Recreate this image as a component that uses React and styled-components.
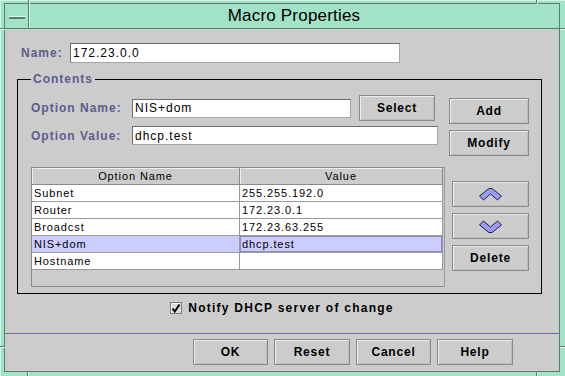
import React from "react";
import styled, { createGlobalStyle } from "styled-components";

const rows = [
  { name: "Subnet", value: "255.255.192.0" },
  { name: "Router", value: "172.23.0.1" },
  { name: "Broadcst", value: "172.23.63.255" },
  { name: "NIS+dom", value: "dhcp.test", selected: true },
  { name: "Hostname", value: "" },
];

const ticks = [
  { dir: "v", left: 28, top: 0 },
  { dir: "v", left: 536, top: 0 },
  { dir: "v", left: 27, bottom: 0 },
  { dir: "v", left: 536, bottom: 0 },
  { dir: "h", left: 0, top: 28 },
  { dir: "h", right: 0, top: 28 },
  { dir: "h", left: 0, top: 346 },
  { dir: "h", right: 0, top: 346 },
];

const ArrowIcon = ({ down }) => (
  <svg width="23" height="13" viewBox="0 0 23 13">
    <polygon
      points={
        down
          ? "0.5,5 4.5,1 11.5,7 18.5,1 22.5,5 13,12.5 10,12.5"
          : "0.5,8 10,0.5 13,0.5 22.5,8 18.5,12 11.5,6 4.5,12"
      }
      fill="#9c9cf2"
      stroke="#1e1e4e"
      strokeWidth="1"
    />
  </svg>
);

export default function App() {
  return (
    <>
      <GlobalStyle />
      <Window>
        {ticks.map((t, i) => (
          <Tick key={i} $dir={t.dir} style={{ left: t.left, right: t.right, top: t.top, bottom: t.bottom }} />
        ))}
        <Frame>
          <TitleBar>
            <MenuButton>
              <Dash />
            </MenuButton>
            <Title>Macro Properties</Title>
          </TitleBar>
          <Body>
            <Main>
              <NameRow>
                <Label $indent>Name:</Label>
                <TextField $w={330} $h={20} readOnly defaultValue="172.23.0.0" />
              </NameRow>
              <Contents>
                <Legend>Contents</Legend>
                <TopSection>
                  <Form>
                    <FormRow $h={26}>
                      <FieldLabel>Option Name:</FieldLabel>
                      <TextField $w={219} $h={19} readOnly defaultValue="NIS+dom" />
                      <Button $w={76} $ml={8}>Select</Button>
                    </FormRow>
                    <FormRow $h={19}>
                      <FieldLabel>Option Value:</FieldLabel>
                      <TextField $w={306} $h={19} readOnly defaultValue="dhcp.test" />
                    </FormRow>
                  </Form>
                  <SideButtons $w={80} $mt={3}>
                    <Button>Add</Button>
                    <Button>Modify</Button>
                  </SideButtons>
                </TopSection>
                <TableSection>
                  <TablePane>
                    <TableRow>
                      <HeaderCell>Option Name</HeaderCell>
                      <HeaderCell>Value</HeaderCell>
                    </TableRow>
                    {rows.map((r) => (
                      <TableRow key={r.name} $selected={r.selected}>
                        <Cell>{r.name}</Cell>
                        <Cell $focus={r.selected}>{r.value}</Cell>
                      </TableRow>
                    ))}
                  </TablePane>
                  <SideButtons $w={77} $mt={14}>
                    <Button>
                      <ArrowIcon />
                    </Button>
                    <Button>
                      <ArrowIcon down />
                    </Button>
                    <Button>Delete</Button>
                  </SideButtons>
                </TableSection>
              </Contents>
              <NotifyRow>
                <CheckBox>
                  <svg width="10" height="10" viewBox="0 0 10 10">
                    <path d="M1.5 5.5 L3.8 8.5 L8.5 1.5" fill="none" stroke="#000" strokeWidth="2" />
                  </svg>
                </CheckBox>
                <NotifyText>Notify DHCP server of change</NotifyText>
              </NotifyRow>
            </Main>
            <Separator />
            <Footer>
              <Button $w={75}>OK</Button>
              <Button $w={76}>Reset</Button>
              <Button $w={75}>Cancel</Button>
              <Button $w={76}>Help</Button>
            </Footer>
          </Body>
        </Frame>
      </Window>
    </>
  );
}

const GlobalStyle = createGlobalStyle`
  html, body {
    margin: 0;
    padding: 0;
    background: #a2e2c6;
  }
  body {
    font-family: "Liberation Sans", Arial, sans-serif;
  }
`;

const Window = styled.div`
  position: relative;
  width: 565px;
  height: 376px;
  box-sizing: border-box;
  padding: 3px 5px 4px 4px;
  background: #a2e2c6;
  box-shadow: inset 1px 1px 0 #d4f6e6;
`;

const Tick = styled.span`
  position: absolute;
  background: #55806b;
  width: ${(p) => (p.$dir === "v" ? "1px" : "5px")};
  height: ${(p) => (p.$dir === "v" ? "4px" : "1px")};
  box-shadow: ${(p) => (p.$dir === "v" ? "1px 0 0 #e2fbef" : "0 1px 0 #e2fbef")};
`;

const Frame = styled.div`
  display: flex;
  flex-direction: column;
  height: 100%;
  box-sizing: border-box;
  border: 1px solid #55806b;
`;

const TitleBar = styled.div`
  display: flex;
  height: 24px;
  border-bottom: 1px solid #55806b;
  background: #a2e2c6;
`;

const MenuButton = styled.div`
  display: flex;
  align-items: center;
  justify-content: center;
  width: 23px;
  border-right: 1px solid #55806b;
  box-shadow: 1px 0 0 #e2fbef;
`;

const Dash = styled.span`
  display: block;
  width: 16px;
  height: 2px;
  margin-top: 2px;
  background: #55806b;
  border-top: 1px solid #e2fbef;
`;

const Title = styled.div`
  flex: 1;
  display: flex;
  align-items: center;
  justify-content: center;
  font-size: 17px;
  color: #000;
  letter-spacing: 0.2px;
`;

const Body = styled.div`
  flex: 1;
  display: flex;
  flex-direction: column;
  background: #cccccc;
`;

const Main = styled.div`
  display: flex;
  flex-direction: column;
  padding: 14px 0 0 12px;
`;

const NameRow = styled.div`
  display: flex;
  align-items: center;
`;

const Label = styled.label`
  font-size: 12px;
  font-weight: bold;
  letter-spacing: 1px;
  color: #5c5c8c;
  margin-left: ${(p) => (p.$indent ? "4px" : "0")};
  width: ${(p) => (p.$indent ? "49px" : "auto")};
`;

const FieldLabel = styled(Label)`
  width: 101px;
`;

const TextField = styled.input`
  box-sizing: border-box;
  width: ${(p) => p.$w}px;
  height: ${(p) => p.$h}px;
  margin: 0;
  padding: 0 2px;
  border: 1px solid;
  border-color: #6c6c6c #a6a6a6 #a6a6a6 #6c6c6c;
  background: #fff;
  font-family: "Liberation Sans", Arial, sans-serif;
  font-size: 12px;
  letter-spacing: 1px;
  color: #000;
  outline: none;
`;

const Contents = styled.fieldset`
  width: 525px;
  box-sizing: border-box;
  margin: 9px 0 0 0;
  padding: 9px 12px 6px 13px;
  border: 1px solid #000;
  min-width: 0;
`;

const Legend = styled.legend`
  padding: 0 2px;
  margin-left: 0;
  font-size: 12px;
  line-height: 14px;
  font-weight: bold;
  letter-spacing: 1px;
  color: #5c5c8c;
`;

const TopSection = styled.div`
  display: flex;
  align-items: flex-start;
`;

const Form = styled.div`
  display: flex;
  flex-direction: column;
  gap: 5px;
`;

const FormRow = styled.div`
  display: flex;
  align-items: center;
  height: ${(p) => p.$h}px;
`;

const SideButtons = styled.div`
  display: flex;
  flex-direction: column;
  gap: 6px;
  margin-left: auto;
  margin-top: ${(p) => p.$mt}px;
  width: ${(p) => p.$w}px;
`;

const Button = styled.button`
  display: flex;
  align-items: center;
  justify-content: center;
  box-sizing: border-box;
  width: ${(p) => (p.$w ? `${p.$w}px` : "100%")};
  height: 26px;
  margin: 0 0 0 ${(p) => p.$ml || 0}px;
  padding: 0;
  border: 1px solid #8a8a8a;
  box-shadow: inset 1px 1px 0 #ececec, inset -1px -1px 0 #bdbdbd;
  background: #cccccc;
  font-family: "Liberation Sans", Arial, sans-serif;
  font-size: 12px;
  font-weight: bold;
  letter-spacing: 0.8px;
  color: #000;
`;

const TableSection = styled.div`
  display: flex;
  align-items: flex-start;
  margin-top: 11px;
`;

const TablePane = styled.div`
  width: 414px;
  height: 120px;
  box-sizing: border-box;
  border: 1px solid #8a8a8a;
  border-right-color: #9a9a9a;
  padding-right: 1px;
  background: #cccccc;
`;

const TableRow = styled.div`
  display: grid;
  grid-template-columns: 208px 1fr;
  height: 17px;
  background: ${(p) => (p.$selected ? "#ccccff" : "#ffffff")};

  &:first-child {
    background: #cccccc;
  }
`;

const HeaderCell = styled.div`
  display: flex;
  align-items: center;
  justify-content: center;
  border-right: 1px solid #8a8a8a;
  border-bottom: 1px solid #8a8a8a;
  box-shadow: inset 1px 1px 0 #eeeeee;
  font-size: 11px;
  letter-spacing: 0.9px;
  color: #000;
`;

const Cell = styled.div`
  display: flex;
  align-items: center;
  padding-left: 2px;
  border-right: 1px solid #9a9a9a;
  border-bottom: 1px solid #9a9a9a;
  box-shadow: ${(p) => (p.$focus ? "inset 0 0 0 1px #8e8ec4" : "none")};
  font-size: 11px;
  letter-spacing: 0.9px;
  color: #000;
  white-space: nowrap;
`;

const NotifyRow = styled.div`
  display: flex;
  align-items: center;
  justify-content: center;
  gap: 6px;
  height: 14px;
  margin-top: 7px;
  padding-right: 12px;
`;

const CheckBox = styled.span`
  display: flex;
  align-items: center;
  justify-content: center;
  box-sizing: border-box;
  width: 12px;
  height: 12px;
  border: 1px solid #7a7a7a;
  box-shadow: inset 1px 1px 0 #f2f2f2;
  background: #dedede;
`;

const NotifyText = styled.span`
  font-size: 12px;
  font-weight: bold;
  letter-spacing: 1.25px;
  color: #000;
`;

const Separator = styled.div`
  height: 1px;
  margin-top: auto;
  background: #6f6fa0;
`;

const Footer = styled.div`
  display: flex;
  justify-content: flex-end;
  gap: 6px;
  padding: 5px 46px 6px 0;
`;
